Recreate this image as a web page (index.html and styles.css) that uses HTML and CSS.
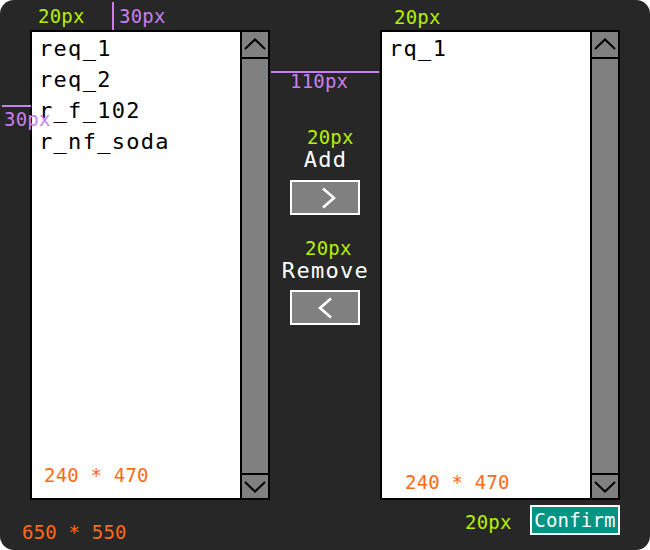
FILE: index.html
```html
<!DOCTYPE html>
<html lang="en">
<head>
<meta charset="utf-8">
<title>Requirement picker</title>
<link rel="stylesheet" href="styles.css">
</head>
<body>
<div class="frame">
  <div class="lists">
    <div class="listbox">
      <ul class="items">
        <li>req_1</li>
        <li>req_2</li>
        <li>r_f_102</li>
        <li>r_nf_soda</li>
      </ul>
      <div class="scrollbar">
        <div class="sb-btn up"><svg width="22" height="12" viewBox="0 0 22 12"><polyline points="1,11 11,1.5 21,11" fill="none" stroke="#000" stroke-width="2"/></svg></div>
        <div class="sb-track"></div>
        <div class="sb-btn down"><svg width="22" height="12" viewBox="0 0 22 12"><polyline points="1,1 11,10.5 21,1" fill="none" stroke="#000" stroke-width="2"/></svg></div>
      </div>
    </div>

    <div class="actions">
      <span class="action-label add-label">Add</span>
      <button class="move-btn add-btn" type="button"><svg width="16" height="22" viewBox="0 0 16 22"><polyline points="2,1.5 13,11 2,20.5" fill="none" stroke="#fff" stroke-width="2.6"/></svg></button>
      <span class="action-label remove-label">Remove</span>
      <button class="move-btn remove-btn" type="button"><svg width="16" height="22" viewBox="0 0 16 22"><polyline points="14,1.5 3,11 14,20.5" fill="none" stroke="#fff" stroke-width="2.6"/></svg></button>
    </div>

    <div class="listbox">
      <ul class="items">
        <li>rq_1</li>
      </ul>
      <div class="scrollbar">
        <div class="sb-btn up"><svg width="22" height="12" viewBox="0 0 22 12"><polyline points="1,11 11,1.5 21,11" fill="none" stroke="#000" stroke-width="2"/></svg></div>
        <div class="sb-track"></div>
        <div class="sb-btn down"><svg width="22" height="12" viewBox="0 0 22 12"><polyline points="1,1 11,10.5 21,1" fill="none" stroke="#000" stroke-width="2"/></svg></div>
      </div>
    </div>
  </div>

  <div class="footer">
    <button class="confirm" type="button">Confirm</button>
  </div>

  <!-- dimension annotations -->
  <span class="note green n-top-left">20px</span>
  <span class="vline v-top"></span>
  <span class="note purple n-top-30">30px</span>
  <span class="note green n-top-right">20px</span>
  <span class="hline h-mid"></span>
  <span class="note purple n-110">110px</span>
  <span class="hline h-left"></span>
  <span class="note purple n-left-30">30px</span>
  <span class="note green n-add">20px</span>
  <span class="note green n-remove">20px</span>
  <span class="note orange n-size-left">240 * 470</span>
  <span class="note orange n-size-right">240 * 470</span>
  <span class="note orange n-size-frame">650 * 550</span>
  <span class="note green n-confirm">20px</span>
</div>
</body>
</html>
```

FILE: styles.css
```css
html, body {
  margin: 0;
  padding: 0;
  background: #ffffff;
}

.frame {
  position: relative;
  width: 650px;
  height: 550px;
  box-sizing: border-box;
  padding: 30px 30px 15px 30px;
  background: #272727;
  border-radius: 14px;
  font-family: "DejaVu Sans Mono", "Liberation Mono", monospace;
  display: flex;
  flex-direction: column;
}

.lists {
  display: flex;
  height: 470px;
}

.listbox {
  width: 240px;
  height: 470px;
  box-sizing: border-box;
  border: 2px solid #000;
  background: #fff;
  display: flex;
}

.items {
  flex: 1;
  list-style: none;
  margin: 0;
  padding: 1px 0 0 7px;
  font-size: 22px;
  letter-spacing: 1.3px;
  line-height: 31px;
  color: #000;
}

.scrollbar {
  width: 28px;
  box-sizing: border-box;
  border-left: 2px solid #000;
  background: #808080;
  display: flex;
  flex-direction: column;
}

.sb-btn {
  display: flex;
  align-items: center;
  justify-content: center;
}

.sb-btn.up {
  height: 23px;
  padding-bottom: 2px;
  border-bottom: 2px solid #000;
}

.sb-btn.down {
  height: 23px;
  border-top: 2px solid #000;
}

.sb-track {
  flex: 1;
}

.actions {
  width: 110px;
  display: flex;
  flex-direction: column;
  align-items: center;
  padding-top: 118px;
  box-sizing: border-box;
}

.action-label {
  color: #fff;
  font-size: 22px;
  letter-spacing: 1.3px;
  padding-left: 1px;
  line-height: 23px;
  height: 23px;
}

.remove-label {
  margin-top: 44px;
}

.move-btn {
  margin: 9px 0 0 0;
  width: 70px;
  height: 35px;
  box-sizing: border-box;
  border: 2px solid #fff;
  background: #808080;
  padding: 0;
  display: flex;
  align-items: center;
  justify-content: center;
}

.remove-btn {
  margin-top: 8px;
}

.add-btn svg {
  margin-left: 8px;
}

.footer {
  display: flex;
  justify-content: flex-end;
  margin-top: 5px;
  height: 30px;
}

.confirm {
  width: 90px;
  height: 30px;
  box-sizing: border-box;
  border: 2px solid #fff;
  background: #009485;
  color: #fff;
  font-family: "DejaVu Sans Mono", "Liberation Mono", monospace;
  font-size: 19px;
  letter-spacing: 0.2px;
  padding: 0;
  line-height: 24px;
}

/* annotations */
.note {
  position: absolute;
  font-size: 19px;
  letter-spacing: 0.2px;
  line-height: 17px;
  white-space: nowrap;
}

.green { color: #b4f000; }
.purple { color: #c77ff0; }
.orange { color: #ff6a13; }

.vline {
  position: absolute;
  width: 2px;
  background: #c77ff0;
}

.hline {
  position: absolute;
  height: 2px;
  background: #c77ff0;
}

.n-top-left { left: 38px; top: 8px; }
.v-top { left: 112px; top: 2px; height: 28px; }
.n-top-right { left: 394px; top: 9px; }
.n-top-30 { left: 119px; top: 8px; }
.h-mid { left: 271px; top: 71px; width: 108px; }
.n-110 { left: 290px; top: 73px; }
.h-left { left: 2px; top: 105px; width: 29px; }
.n-left-30 { left: 4px; top: 111px; }
.n-add { left: 307px; top: 129px; }
.n-remove { left: 305px; top: 240px; }
.n-size-left { left: 44px; top: 467px; }
.n-size-right { left: 405px; top: 474px; }
.n-size-frame { left: 22px; top: 524px; }
.n-confirm { left: 465px; top: 514px; }
```
